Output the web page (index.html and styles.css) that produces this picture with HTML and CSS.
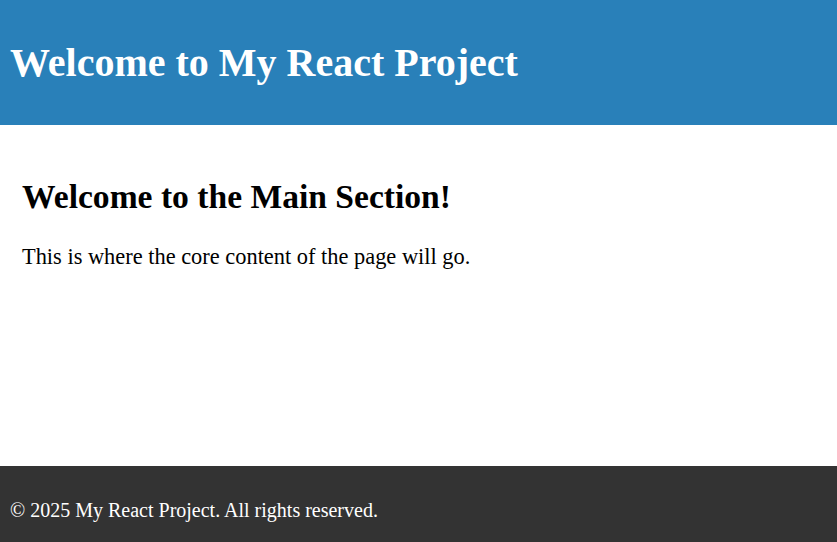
FILE: index.html
```html
<!DOCTYPE html>
<html>
<head>
<meta charset="utf-8">
<title>My React Project</title>
<link rel="stylesheet" href="styles.css">
</head>
<body>
<header class="site-header">
  <h1 class="site-title">Welcome to My React Project</h1>
</header>
<main class="main-section">
  <h2 class="main-title">Welcome to the Main Section!</h2>
  <p class="main-text">This is where the core content of the page will go.</p>
</main>
<footer class="site-footer">
  <p class="footer-text">© 2025 My React Project. All rights reserved.</p>
</footer>
</body>
</html>
```

FILE: styles.css
```css
html, body {
  margin: 0;
  padding: 0;
}
body {
  font-family: "Liberation Serif", "Times New Roman", serif;
  color: #000;
  background: #fff;
}
.site-header {
  background: #2980b9;
  color: #fff;
  padding: 12px 10px 12px;
}
.site-title {
  font-size: 40px;
  font-weight: bold;
  margin: 26.8px 0;
}
.main-section {
  box-sizing: border-box;
  font-size: 22.4px;
  padding: 26px 22px 20px;
  min-height: 341px;
}
.main-title {
  font-size: 33.6px;
  margin: 27.9px 0;
}
.main-text {
  margin: 0;
}
.site-footer {
  background: #333;
  color: #fff;
  padding: 33px 10px 20px;
  font-size: 20px;
}
.footer-text {
  margin: 0;
}
```
